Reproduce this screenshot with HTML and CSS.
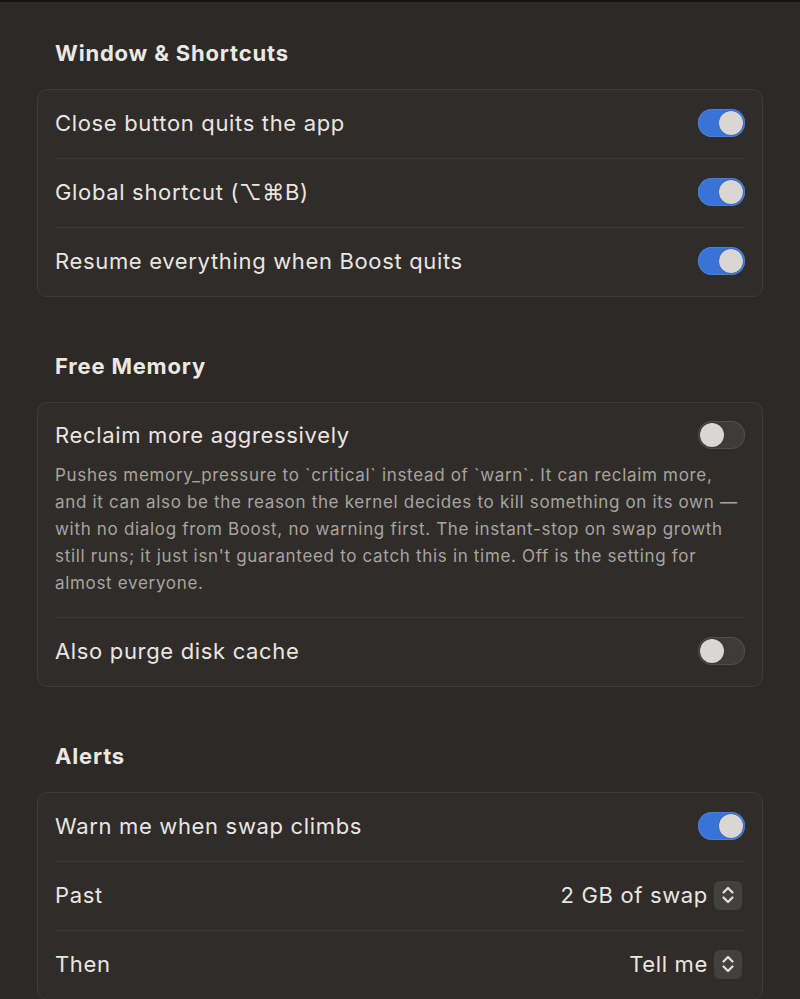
FILE: index.html
```html
<!DOCTYPE html>
<html lang="en">
<head>
<meta charset="utf-8">
<title>Settings</title>
<link rel="stylesheet" href="styles.css">
</head>
<body>
<main class="page">
  <section class="group">
    <h2 class="group-title">Window &amp; Shortcuts</h2>
    <div class="card">
      <div class="row"><span class="label">Close button quits the app</span><span class="toggle on"><span class="knob"></span></span></div>
      <div class="row"><span class="label">Global shortcut (⌥⌘B)</span><span class="toggle on"><span class="knob"></span></span></div>
      <div class="row"><span class="label">Resume everything when Boost quits</span><span class="toggle on"><span class="knob"></span></span></div>
    </div>
  </section>

  <section class="group">
    <h2 class="group-title">Free Memory</h2>
    <div class="card">
      <div class="row row-tall">
        <div class="row-head"><span class="label">Reclaim more aggressively</span><span class="toggle"><span class="knob"></span></span></div>
        <p class="desc">Pushes memory_pressure to `critical` instead of `warn`. It can reclaim more, and it can also be the reason the kernel decides to kill something on its own — with no dialog from Boost, no warning first. The instant-stop on swap growth still runs; it just isn't guaranteed to catch this in time. Off is the setting for almost everyone.</p>
      </div>
      <div class="row"><span class="label">Also purge disk cache</span><span class="toggle"><span class="knob"></span></span></div>
    </div>
  </section>

  <section class="group">
    <h2 class="group-title">Alerts</h2>
    <div class="card">
      <div class="row"><span class="label">Warn me when swap climbs</span><span class="toggle on"><span class="knob"></span></span></div>
      <div class="row"><span class="label">Past</span>
        <span class="picker"><span class="value">2 GB of swap</span><span class="stepper"><svg viewBox="0 0 28 28" width="28" height="28"><path d="M9.5 11.5 L14 7 L18.5 11.5 M9.5 16.5 L14 21 L18.5 16.5" fill="none" stroke="#e6e3df" stroke-width="2.2" stroke-linecap="round" stroke-linejoin="round"/></svg></span></span>
      </div>
      <div class="row"><span class="label">Then</span>
        <span class="picker"><span class="value">Tell me</span><span class="stepper"><svg viewBox="0 0 28 28" width="28" height="28"><path d="M9.5 11.5 L14 7 L18.5 11.5 M9.5 16.5 L14 21 L18.5 16.5" fill="none" stroke="#e6e3df" stroke-width="2.2" stroke-linecap="round" stroke-linejoin="round"/></svg></span></span>
      </div>
    </div>
  </section>
</main>
</body>
</html>
```

FILE: styles.css
```css
html, body {
  margin: 0;
  padding: 0;
  background: #2c2927;
}
body {
  border-top: 2px solid #161514;
  font-family: Inter, "Noto Sans", "DejaVu Sans", sans-serif;
  color: #e8e5e1;
  overflow: hidden;
  height: 997px;
}
.page {
  padding: 37px 37px 0 37px;
  display: flex;
  flex-direction: column;
  gap: 55px;
}
.group-title {
  margin: 0 0 22px 0;
  padding-left: 18px;
  font-size: 22px;
  line-height: 28px;
  font-weight: 700;
  letter-spacing: 0.037em;
  color: #ebe8e4;
}
.card {
  background: #2f2c2a;
  border: 1px solid #3e3b38;
  border-radius: 10px;
  display: flex;
  flex-direction: column;
}
.row {
  min-height: 68px;
  padding: 0 17px 2px 17px;
  box-sizing: border-box;
  display: flex;
  align-items: center;
  justify-content: space-between;
  position: relative;
}
.row + .row::before {
  content: "";
  position: absolute;
  top: -1px;
  left: 17px;
  right: 17px;
  height: 1px;
  background: #3b3835;
}
.row + .row {
  margin-top: 1px;
}
.label {
  font-size: 22px;
  line-height: 28px;
  letter-spacing: 0.03em;
  color: #e9e6e2;
}
.row-tall {
  flex-direction: column;
  align-items: stretch;
  padding-top: 18px;
  padding-bottom: 20px;
}
.row-head {
  display: flex;
  align-items: center;
  justify-content: space-between;
}
.desc {
  margin: 13px 0 0 0;
  font-size: 17px;
  line-height: 27px;
  letter-spacing: 0.04em;
  color: #a8a49f;
  max-width: 692px;
}
.toggle {
  width: 47px;
  height: 28px;
  border-radius: 14px;
  background: #3e3b38;
  box-shadow: inset 0 0 0 1px #514d49;
  display: flex;
  align-items: center;
  padding: 0 2px;
  box-sizing: border-box;
  flex-shrink: 0;
}
.toggle.on {
  background: #3a73d8;
  box-shadow: inset 0 0 0 1px #4a7fd8;
  justify-content: flex-end;
}
.knob {
  width: 24px;
  height: 24px;
  border-radius: 50%;
  background: #d9d7d4;
  box-shadow: 0 0 1px rgba(0,0,0,0.5);
}
.picker {
  display: flex;
  align-items: center;
  gap: 6px;
  margin-right: 3px;
}
.value {
  font-size: 22px;
  line-height: 28px;
  letter-spacing: 0.03em;
  color: #e9e6e2;
}
.stepper {
  width: 28px;
  height: 29px;
  border-radius: 6px;
  background: #43403d;
  display: flex;
  align-items: center;
  justify-content: center;
}
.stepper svg {
  display: block;
}
```
